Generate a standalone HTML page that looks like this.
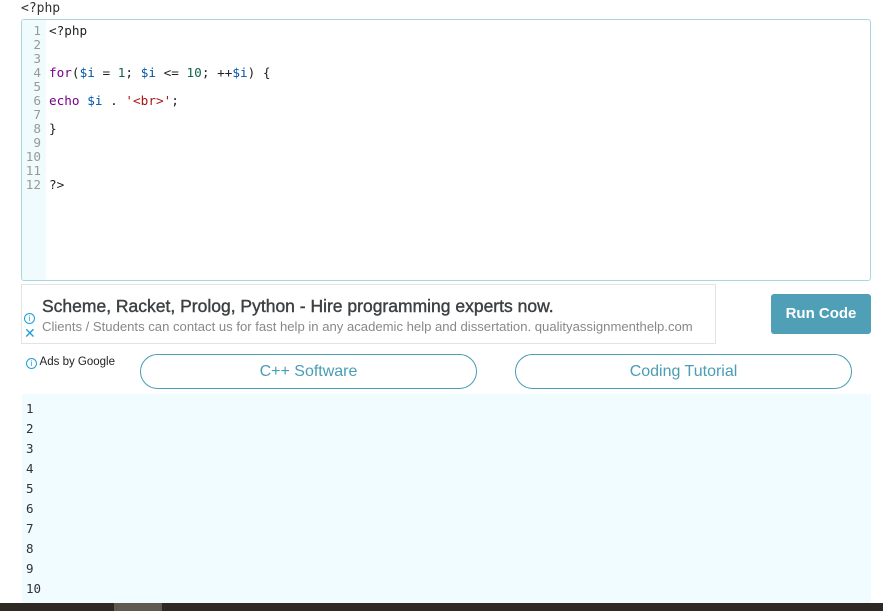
<!DOCTYPE html>
<html><head><meta charset="utf-8"><style>
body{margin:0;width:883px;height:611px;background:#fff;position:relative;overflow:hidden;font-family:"Liberation Sans",sans-serif}
.mono{font-family:"DejaVu Sans Mono","Liberation Mono",monospace}
#top{position:absolute;left:21px;top:1px;font-size:13px;color:#333}
#ed{position:absolute;left:21px;top:19px;width:848px;height:260px;border:1px solid #a9d6e0;border-radius:3px;background:#fff;overflow:hidden}
#gut{position:absolute;left:0;top:0;width:24px;height:100%;background:#f0fbfd}
.ln{position:absolute;font-size:12.7px;line-height:14px;white-space:pre}
.g{color:#999;left:0px;width:19px;text-align:right}
.c{left:27px;color:#222}
.kw{color:#708}.v{color:#05a}.n{color:#164}.s{color:#a11}
#ad{position:absolute;left:21px;top:284px;width:693px;height:58px;border:1px solid #e3e3e3}
#ad .t{position:absolute;left:20px;top:11px;font-size:17.5px;color:#3c4043;font-weight:normal;-webkit-text-stroke:0.4px #3c4043}
#ad .d{position:absolute;left:20px;top:34px;font-size:13.1px;color:#888}
#run{position:absolute;left:771px;top:294px;width:100px;height:40px;background:#4f9fb6;border-radius:3px;color:#fff;font-weight:bold;font-size:15px;text-align:center;line-height:40px}
.pill{position:absolute;top:354px;height:33px;width:335px;border:1px solid #4a9db5;border-radius:18px;color:#4a9db5;font-size:16px;text-align:center;line-height:33px}
#out{position:absolute;left:22px;top:394px;width:849px;height:209px;background:#f0fcff}
#out div{position:absolute;left:4px;font-size:12.5px;color:#333}
#bar{position:absolute;left:0;top:603px;width:883px;height:8px;background:#2e2a23}
</style></head><body>
<div id="top" class="mono">&lt;?php</div>
<div id="ed" class="mono"><div id="gut"></div>
<div class="ln g" style="top:4px">1
2
3
4
5
6
7
8
9
10
11
12</div>
<div class="ln c" style="top:4px">&lt;?php</div>
<div class="ln c" style="top:46px"><span class="kw">for</span>(<span class="v">$i</span> = <span class="n">1</span>; <span class="v">$i</span> &lt;= <span class="n">10</span>; ++<span class="v">$i</span>) {</div>
<div class="ln c" style="top:74px"><span class="kw">echo</span> <span class="v">$i</span> . <span class="s">'&lt;br&gt;'</span>;</div>
<div class="ln c" style="top:102px">}</div>
<div class="ln c" style="top:158px">?&gt;</div>
</div>
<div id="ad"><div class="t">Scheme, Racket, Prolog, Python - Hire programming experts now.</div><div class="d">Clients / Students can contact us for fast help in any academic help and dissertation. qualityassignmenthelp.com</div>
<div style="position:absolute;left:2px;top:28px;width:9px;height:9px;border:1px solid #1ca0d8;border-radius:50%;font-size:8px;color:#1ca0d8;text-align:center;line-height:9px">i</div>
<div style="position:absolute;left:2px;top:40px;font-size:14px;color:#1ca0d8">✕</div></div>
<div id="run">Run Code</div>
<div style="position:absolute;left:26px;top:356px;font-size:11.5px;color:#222"><span style="display:inline-block;width:9px;height:9px;border:1px solid #1ca0d8;border-radius:50%;font-size:8px;color:#1ca0d8;text-align:center;line-height:9px;vertical-align:-1px">i</span> Ads by Google</div>
<div class="pill" style="left:140px">C++ Software</div>
<div class="pill" style="left:515px">Coding Tutorial</div>
<div id="out" class="mono">
<div style="top:7px">1</div><div style="top:27px">2</div><div style="top:47px">3</div><div style="top:67px">4</div><div style="top:87px">5</div><div style="top:107px">6</div><div style="top:127px">7</div><div style="top:147px">8</div><div style="top:167px">9</div><div style="top:187px">10</div>
</div>
<div id="bar"><div style="position:absolute;left:114px;width:48px;height:8px;background:#5e5a50"></div></div>
</body></html>
